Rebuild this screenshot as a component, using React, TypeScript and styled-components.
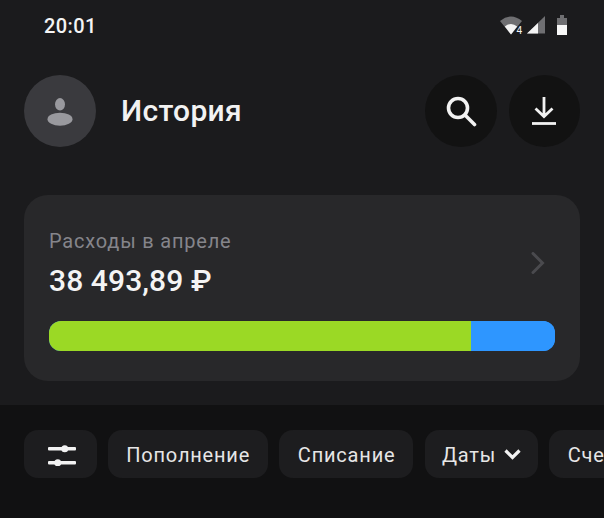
import styled, { createGlobalStyle } from "styled-components";

const GlobalStyle = createGlobalStyle`
  html, body {
    margin: 0;
    padding: 0;
    background: #1b1b1d;
  }
  * {
    box-sizing: border-box;
  }
`;

const Screen = styled.div`
  width: 604px;
  height: 518px;
  overflow: hidden;
  display: flex;
  flex-direction: column;
  background: #1b1b1d;
  font-family: Roboto, "Noto Sans", sans-serif;
  color: #f2f2f2;
`;

const StatusBar = styled.div`
  height: 52px;
  padding: 0 37px 0 44px;
  display: flex;
  align-items: center;
  justify-content: space-between;
`;

const Time = styled.span`
  font-size: 20px;
  font-weight: 500;
  line-height: 24px;
  letter-spacing: 0.4px;
  color: #f4f4f4;
`;

const StatusIcons = styled.div`
  display: flex;
  align-items: center;
  gap: 12px;
  padding-bottom: 3px;
`;

const Header = styled.header`
  margin-top: 23px;
  padding: 0 24px;
  display: flex;
  align-items: center;
`;

const Avatar = styled.div`
  width: 72px;
  height: 72px;
  border-radius: 50%;
  background: #3a3a3e;
  display: flex;
  align-items: center;
  justify-content: center;
`;

const Title = styled.h1`
  margin: 0 auto 0 25px;
  font-size: 30px;
  font-weight: 500;
  line-height: 34px;
  letter-spacing: 0.3px;
  color: #f2f2f2;
`;

const RoundButtons = styled.div`
  display: flex;
  gap: 12px;
`;

const RoundButton = styled.div`
  width: 71.5px;
  height: 72px;
  border-radius: 50%;
  background: #121212;
  display: flex;
  align-items: center;
  justify-content: center;
`;

const Card = styled.section`
  margin: 48px 24px 0;
  height: 186px;
  border-radius: 24px;
  background: #28282a;
  padding: 33px 25px 30px;
  display: flex;
  flex-direction: column;
`;

const CardTop = styled.div`
  display: flex;
  align-items: center;
  justify-content: space-between;
  height: 93px;
`;

const CardText = styled.div`
  align-self: flex-start;
`;

const CardLabel = styled.div`
  font-size: 20px;
  line-height: 26px;
  letter-spacing: 0.8px;
  color: #85858b;
`;

const CardAmount = styled.div`
  margin-top: 9px;
  font-size: 30px;
  font-weight: 500;
  line-height: 36px;
  letter-spacing: 0.1px;
  color: #f4f4f4;
`;

const ChevronBox = styled.div`
  margin-right: 10px;
  margin-top: -24px;
  display: flex;
`;

const Bar = styled.div`
  height: 30px;
  border-radius: 12px;
  overflow: hidden;
  display: flex;
  background: #2e96ff;
`;

const BarPart = styled.div<{ $color: string }>`
  height: 100%;
  background: ${(p) => p.$color};
`;

const FilterBar = styled.nav`
  margin-top: 24px;
  flex: 1;
  background: #111112;
  padding: 25px 0 0 24px;
  display: flex;
  align-items: flex-start;
  gap: 11.2px;
`;

const Chip = styled.div<{ $width: number }>`
  flex: 0 0 ${(p) => p.$width}px;
  height: 48px;
  padding: 1px 0 0 1px;
  border-radius: 14px;
  background: #1d1d1f;
  display: flex;
  align-items: center;
  justify-content: center;
  gap: 8px;
  font-size: 20px;
  letter-spacing: 0.8px;
  color: #e6e6e6;
`;

const LastChip = styled(Chip)`
  justify-content: flex-start;
  padding-left: 19px;
`;

const spending = [
  { color: "#9bd925", share: 83.4 },
  { color: "#2e96ff", share: 16.6 },
];

function StatusGlyphs() {
  return (
    <StatusIcons>
      <svg width="45" height="20" viewBox="0 0 45 20">
        <path d="M0 6 Q11 -3 22 6 L11 19.5 Z" fill="#6f6f72" />
        <path d="M4.8 11.5 Q11 6.5 17.2 11.5 L11 19.5 Z" fill="#f4f4f4" />
        <text x="16.5" y="19" fontSize="10" fontFamily="Roboto, sans-serif" fill="#f4f4f4">4</text>
        <path d="M27 18.5 L45 1 V18.5 Z" fill="#6f6f72" />
        <path d="M27 18.5 L38 8 V18.5 Z" fill="#f4f4f4" />
      </svg>
      <svg width="10" height="20" viewBox="0 0 10 20">
        <path d="M0 3 H3 V0 H7 V3 H10 V10 H0 Z" fill="#6f6f72" />
        <rect x="0" y="10" width="10" height="10" fill="#f8f8f8" />
      </svg>
    </StatusIcons>
  );
}

function App() {
  return (
    <>
      <GlobalStyle />
      <Screen>
        <StatusBar>
          <Time>20:01</Time>
          <StatusGlyphs />
        </StatusBar>

        <Header>
          <Avatar>
            <svg width="26" height="30" viewBox="0 0 26 30">
              <ellipse cx="13" cy="8.3" rx="5" ry="6.2" fill="#99999e" />
              <ellipse cx="13" cy="23.2" rx="12.5" ry="6.5" fill="#99999e" />
            </svg>
          </Avatar>
          <Title>История</Title>
          <RoundButtons>
            <RoundButton>
              <svg width="32" height="32" viewBox="0 0 32 32" fill="none" stroke="#f2f2f2" strokeWidth="3.6">
                <circle cx="13" cy="13" r="9.5" />
                <path d="M20 20 L29.5 29.5" strokeLinecap="round" />
              </svg>
            </RoundButton>
            <RoundButton>
              <svg width="26" height="30" viewBox="0 0 26 30" fill="none" stroke="#f2f2f2" strokeWidth="2.8">
                <path d="M13 1 V20 M4.5 12.5 L13 20.5 L21.5 12.5" />
                <path d="M1 27.5 H25" />
              </svg>
            </RoundButton>
          </RoundButtons>
        </Header>

        <Card>
          <CardTop>
            <CardText>
              <CardLabel>Расходы в апреле</CardLabel>
              <CardAmount>38 493,89 ₽</CardAmount>
            </CardText>
            <ChevronBox>
              <svg width="14" height="22" viewBox="0 0 14 22" fill="none" stroke="#4a4a4e" strokeWidth="3">
                <path d="M2 1.5 L11.5 11 L2 20.5" strokeLinecap="round" />
              </svg>
            </ChevronBox>
          </CardTop>
          <Bar>
            {spending.map((s) => (
              <BarPart key={s.color} $color={s.color} style={{ width: `${s.share}%` }} />
            ))}
          </Bar>
        </Card>

        <FilterBar>
          <Chip $width={72.5}>
            <svg width="30" height="22" viewBox="0 0 30 22" fill="#f2f2f2">
              <rect x="2" y="3" width="28" height="3.6" rx="1" />
              <circle cx="18.75" cy="4.8" r="3.5" />
              <rect x="2" y="17" width="28" height="3.6" rx="1" />
              <circle cx="11.75" cy="18.8" r="3.5" />
            </svg>
          </Chip>
          <Chip $width={160}>Пополнение</Chip>
          <Chip $width={134.5}>Списание</Chip>
          <Chip $width={113}>
            Даты
            <svg width="17" height="11" viewBox="0 0 17 11" fill="none" stroke="#f2f2f2" strokeWidth="3.2">
              <path d="M1.5 1.5 L8.5 8.5 L15.5 1.5" />
            </svg>
          </Chip>
          <LastChip $width={120}>Счета</LastChip>
        </FilterBar>
      </Screen>
    </>
  );
}

export default App;
